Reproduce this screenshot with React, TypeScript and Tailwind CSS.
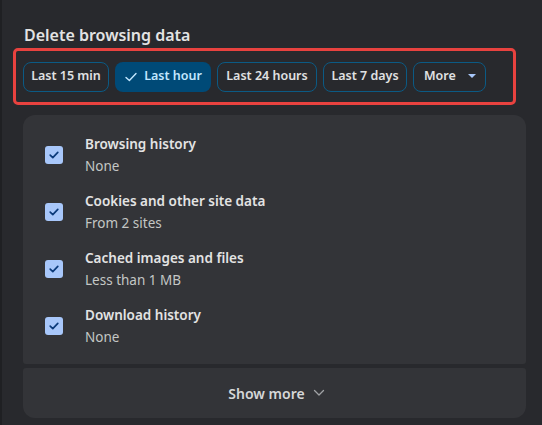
import React from "react";

const chips = [
  { label: "Last 15 min", w: "w-[86px]" },
  { label: "Last hour", w: "w-[96px]", active: true },
  { label: "Last 24 hours", w: "w-[100px]" },
  { label: "Last 7 days", w: "w-[84px]" },
];

const items = [
  { title: "Browsing history", sub: "None" },
  { title: "Cookies and other site data", sub: "From 2 sites" },
  { title: "Cached images and files", sub: "Less than 1 MB" },
  { title: "Download history", sub: "None" },
];

function Check() {
  return (
    <div className="w-[18px] h-[18px] rounded-[3px] bg-[#a8c7fa] flex items-center justify-center shrink-0">
      <svg width="12" height="12" viewBox="0 0 12 12" fill="none">
        <path d="M2.2 6.2 L4.8 8.6 L9.8 3.4" stroke="#0b3a7a" strokeWidth="1.7" strokeLinecap="round" strokeLinejoin="round" />
      </svg>
    </div>
  );
}

export default function App() {
  return (
    <div
      className="w-[542px] h-[425px] bg-[#28292d] text-[#e3e3e3] overflow-hidden flex"
      style={{ fontFamily: '"Segoe UI", "Noto Sans", "Open Sans", sans-serif' }}
    >
      <div className="w-[2px] bg-[#1f2023] shrink-0" />
      <div className="flex-1 flex flex-col pl-[11px] pr-[14px]">
        <div className="h-[48px] flex items-end pb-[2px] pl-[11px]">
          <h1 className="text-[16px] font-semibold leading-[22px] text-[#e3e3e3]">Delete browsing data</h1>
        </div>
        <div className="h-[57px] border-[3px] border-[#e8423f] rounded-[5px] flex items-center gap-[6px] pl-[7px] w-[503px]">
          {chips.map((c) =>
            c.active ? (
              <div
                key={c.label}
                className={`${c.w} h-[30px] rounded-[8px] bg-[#004a77] text-[#c2e7ff] flex items-center justify-center gap-[6px] text-[12.5px] font-semibold`}
              >
                <svg width="14" height="14" viewBox="0 0 14 14" fill="none">
                  <path d="M2 7.4 L5.4 10.6 L12 3.6" stroke="#c2e7ff" strokeWidth="1.4" strokeLinecap="round" strokeLinejoin="round" />
                </svg>
                <span>{c.label}</span>
              </div>
            ) : (
              <div
                key={c.label}
                className={`${c.w} h-[30px] rounded-[8px] border-[1.5px] border-[#0b5a84] flex items-center justify-center text-[12.5px] font-semibold text-[#e0e1e2]`}
              >
                {c.label}
              </div>
            )
          )}
          <div className="w-[73px] h-[30px] rounded-[8px] border-[1.5px] border-[#0b5a84] flex items-center pl-[10px] gap-[12px] text-[12.5px] font-semibold text-[#e0e1e2]">
            <span>More</span>
            <svg width="8" height="5" viewBox="0 0 8 5">
              <path d="M0 0 L8 0 L4 4 Z" fill="#a8c7fa" />
            </svg>
          </div>
        </div>
        <div className="mt-[10px] ml-[10px] w-[503px] flex flex-col gap-[4px]">
          <div className="bg-[#333438] rounded-t-[12px] rounded-b-[3px] pt-[19px] pb-[17px] flex flex-col gap-[15px]">
            {items.map((it) => (
              <div key={it.title} className="flex items-center pl-[22px]">
                <Check />
                <div className="ml-[22px] flex flex-col">
                  <span className="text-[13.5px] font-semibold leading-[20px] text-[#e3e3e3]">{it.title}</span>
                  <span className="text-[13.5px] leading-[20px] text-[#c4c7c5] mt-[2px]">{it.sub}</span>
                </div>
              </div>
            ))}
          </div>
          <div className="bg-[#333438] rounded-b-[12px] rounded-t-[3px] h-[50px] flex items-center justify-center gap-[8px] pl-[4px]">
            <span className="text-[14px] font-semibold text-[#d6d7d8]">Show more</span>
            <svg width="12" height="8" viewBox="0 0 12 8" fill="none">
              <path d="M1.5 1.5 L6 6 L10.5 1.5" stroke="#a0a2a5" strokeWidth="1.3" strokeLinecap="round" strokeLinejoin="round" />
            </svg>
          </div>
        </div>
      </div>
    </div>
  );
}
